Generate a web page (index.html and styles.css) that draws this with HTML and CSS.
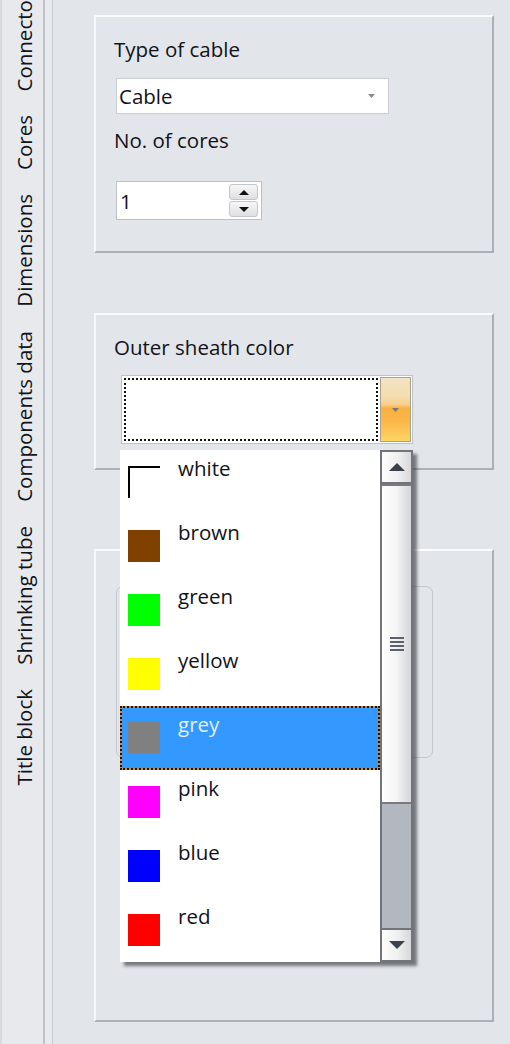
FILE: index.html
```html
<!DOCTYPE html>
<html lang="en">
<head>
<meta charset="utf-8">
<title>Cable properties</title>
<link rel="stylesheet" href="styles.css">
</head>
<body>
<div class="window">
  <nav class="tabs">
    <div class="tab">Connectors</div>
    <div class="tab">Cores</div>
    <div class="tab">Dimensions</div>
    <div class="tab">Components data</div>
    <div class="tab">Shrinking tube</div>
    <div class="tab">Title block</div>
  </nav>
  <div class="divider"></div>
  <main class="content">
    <section class="group g1">
      <div class="label">Type of cable</div>
      <div class="combo">
        <span class="combo-text">Cable</span>
        <svg class="caret" width="7" height="4" viewBox="0 0 7 4"><path d="M0 0H7L3.5 4Z" fill="#8a8c90"/></svg>
      </div>
      <div class="label l2">No. of cores</div>
      <div class="spin">
        <span class="spin-text">1</span>
        <div class="spin-btns">
          <div class="spin-btn"><svg width="10" height="5" viewBox="0 0 10 5"><path d="M0 5H10L5 0Z" fill="#111"/></svg></div>
          <div class="spin-btn"><svg width="10" height="5" viewBox="0 0 10 5"><path d="M0 0H10L5 5Z" fill="#111"/></svg></div>
        </div>
      </div>
    </section>

    <section class="group g2">
      <div class="label">Outer sheath color</div>
      <div class="color-combo">
        <div class="cc-field"></div>
        <div class="cc-btn"><svg width="7" height="4" viewBox="0 0 7 4"><path d="M0 0H7L3.5 4Z" fill="#7a7672"/></svg></div>
        <div class="dropdown">
          <ul class="items">
            <li class="item"><span class="sw sw-white"></span><span class="name">white</span></li>
            <li class="item"><span class="sw" style="background:#804000"></span><span class="name">brown</span></li>
            <li class="item"><span class="sw" style="background:#00ff00"></span><span class="name">green</span></li>
            <li class="item"><span class="sw" style="background:#ffff00"></span><span class="name">yellow</span></li>
            <li class="item sel"><span class="sw" style="background:#808080"></span><span class="name">grey</span></li>
            <li class="item"><span class="sw" style="background:#ff00ff"></span><span class="name">pink</span></li>
            <li class="item"><span class="sw" style="background:#0000ff"></span><span class="name">blue</span></li>
            <li class="item"><span class="sw" style="background:#ff0000"></span><span class="name">red</span></li>
          </ul>
          <div class="scrollbar">
            <div class="sb-btn sb-up"><svg width="16" height="8" viewBox="0 0 16 8"><path d="M0 8H16L8 0Z" fill="#3c4150"/></svg></div>
            <div class="thumb"><span class="grip"></span></div>
            <div class="track"></div>
            <div class="sb-btn sb-down"><svg width="16" height="8" viewBox="0 0 16 8"><path d="M0 0H16L8 8Z" fill="#3c4150"/></svg></div>
          </div>
        </div>
      </div>
    </section>

    <section class="group g3">
      <div class="panel"></div>
    </section>
  </main>
</div>
</body>
</html>
```

FILE: styles.css
```css
html, body {
  margin: 0;
  padding: 0;
}

body {
  width: 510px;
  height: 1044px;
  overflow: hidden;
  background: #e2e5e9;
  font-family: "Open Sans", "Noto Sans", sans-serif;
  font-size: 20.5px;
  color: #121218;
}

.window {
  display: flex;
  height: 1044px;
}

/* vertical tab strip */
.tabs {
  width: 43px;
  flex-shrink: 0;
  box-sizing: border-box;
  border-left: 2px solid #d7dbdf;
  background: #e7e9ec;
  display: flex;
  flex-direction: column;
  justify-content: flex-end;
  align-items: flex-start;
  padding: 0 0 247px 10px;
  overflow: hidden;
}

.tab {
  writing-mode: vertical-rl;
  transform: rotate(180deg);
  line-height: 24px;
  padding: 12px 0;
  white-space: nowrap;
  flex-shrink: 0;
}

.divider {
  width: 7px;
  flex-shrink: 0;
  border-left: 2px solid #bdc2c8;
  border-right: 1px solid #c6cbd0;
  background: #e7e9ec;
}

.content {
  flex: 1;
  padding: 15px 0 0 41px;
}

/* group boxes */
.group {
  box-sizing: border-box;
  width: 400px;
  border-top: 2px solid #fbfcfc;
  border-left: 2px solid #f7f8f9;
  border-right: 2px solid #a9b0b7;
  border-bottom: 2px solid #a9b0b7;
  padding: 20px 0 0 18px;
}

.g1 { height: 238px; }
.g2 { height: 157px; margin-top: 60px; }
.g3 { height: 473px; margin-top: 79px; padding-top: 35px; }

.label {
  line-height: 24px;
  white-space: nowrap;
}

.l2 { margin-top: 14px; }

/* simple combo */
.combo {
  margin: 17px 0 0 2px;
  width: 273px;
  height: 36px;
  box-sizing: border-box;
  border: 1px solid #c8cdd2;
  background: #fff;
  display: flex;
  align-items: center;
  padding-left: 2px;
  line-height: 24px;
}

.caret {
  margin-left: auto;
  margin-right: 13px;
}

/* spin box */
.spin {
  margin: 29px 0 0 2px;
  width: 146px;
  height: 39px;
  box-sizing: border-box;
  border: 1px solid #bcc1c6;
  background: #fff;
  display: flex;
  align-items: center;
  padding-left: 3px;
  line-height: 24px;
}

.spin-btns {
  margin-left: auto;
  margin-right: 3px;
  width: 29px;
  display: flex;
  flex-direction: column;
  gap: 1px;
}

.spin-btn {
  height: 16px;
  box-sizing: border-box;
  border: 1px solid #c3c7cc;
  border-radius: 3px;
  background: linear-gradient(#f7f7f8, #dedfe2);
  display: flex;
  align-items: center;
  justify-content: center;
}

/* colour combo */
.color-combo {
  position: relative;
  margin: 16px 0 0 7px;
  width: 292px;
  height: 69px;
  box-sizing: border-box;
  border: 1px solid #bfc4c9;
  background: #fff;
  display: flex;
  padding: 2px 1px 2px 2px;
}

.cc-field {
  flex: 1;
  border: 2px dotted #111;
  margin-right: 2px;
}

.cc-btn {
  width: 31px;
  box-sizing: border-box;
  margin: -1px 0;
  border: 1px solid #a9a38e;
  background: linear-gradient(#f1e3c6 0%, #f5dcae 30%, #f8cf8a 42%, #fab040 48%, #fbb84a 70%, #fdd563 100%);
  display: flex;
  align-items: center;
  justify-content: center;
}

.dropdown {
  position: absolute;
  left: -2px;
  top: 74px;
  width: 293px;
  height: 512px;
  display: flex;
  background: #fff;
  box-shadow: 4px 4px 3px rgba(45, 47, 52, 0.6);
  z-index: 5;
}

.items {
  list-style: none;
  margin: 0;
  padding: 0;
  width: 260px;
}

.item {
  height: 64px;
  box-sizing: border-box;
  display: flex;
  align-items: flex-start;
  padding-left: 8px;
}

.sw {
  width: 32px;
  height: 32px;
  margin-top: 16px;
  flex-shrink: 0;
  box-sizing: border-box;
}

.sw-white {
  background: #fff;
  border-top: 2px solid #000;
  border-left: 2px solid #000;
}

.name {
  margin: 6px 0 0 18px;
  line-height: 24px;
}

.item.sel {
  border: 2px dotted #1e1306;
  background: linear-gradient(#3399ff, #3399ff) padding-box, #c98a4c border-box;
  padding-left: 6px;
  color: #e8eefa;
}

.item.sel .sw { margin-top: 14px; }
.item.sel .name { margin-top: 4px; }

/* scrollbar */
.scrollbar {
  width: 33px;
  box-sizing: border-box;
  border-left: 2px solid #727479;
  border-right: 2px solid #727479;
  background: #b3b7c0;
  display: flex;
  flex-direction: column;
}

.sb-btn {
  height: 34px;
  box-sizing: border-box;
  border-top: 2px solid #727479;
  border-bottom: 2px solid #727479;
  background: linear-gradient(90deg, #fdfdfd, #f0f0f1 55%, #d6d7db);
  display: flex;
  align-items: center;
  justify-content: center;
  flex-shrink: 0;
}

.thumb {
  height: 320px;
  box-sizing: border-box;
  border-top: 2px solid #787a7f;
  border-bottom: 2px solid #787a7f;
  background: linear-gradient(90deg, #ffffff 0%, #f4f4f5 50%, #d4d5da 100%);
  display: flex;
  align-items: center;
  justify-content: center;
  flex-shrink: 0;
}

.grip {
  width: 14px;
  height: 14px;
  background: repeating-linear-gradient(#5d626c 0 2px, transparent 2px 4px);
}

.track {
  flex: 1;
}

/* panel inside third group */
.panel {
  margin-left: 2px;
  width: 317px;
  height: 172px;
  box-sizing: border-box;
  border: 1px solid #c2c8ce;
  border-radius: 7px;
}
```
